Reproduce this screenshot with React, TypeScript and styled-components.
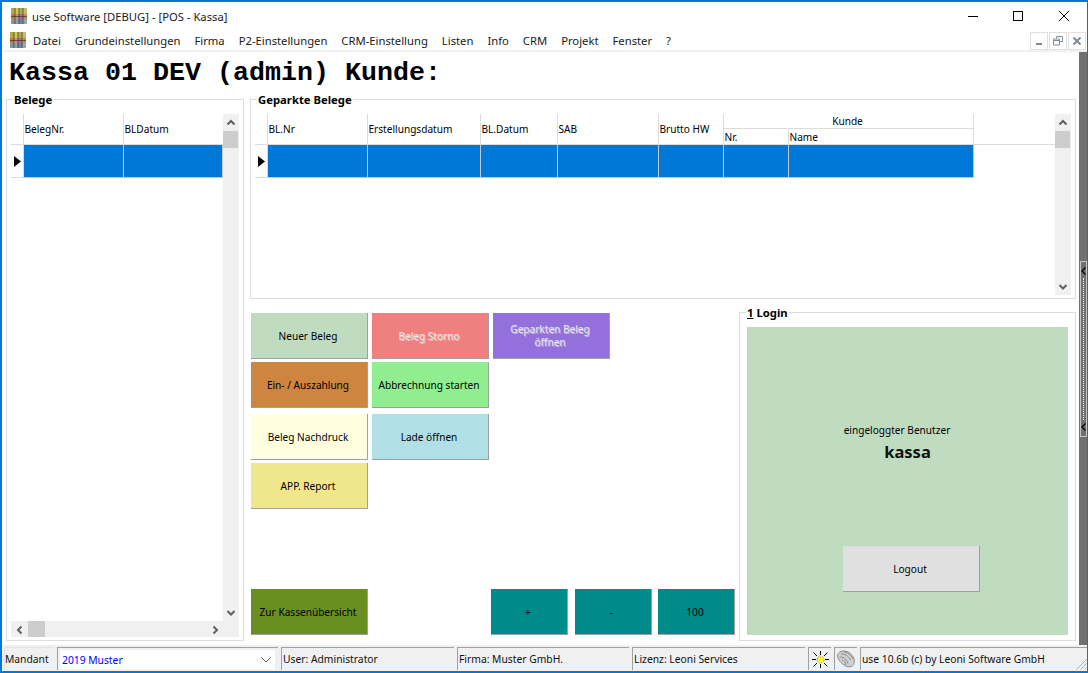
import React from "react";
import styled, { createGlobalStyle } from "styled-components";

const UI_FONT = `"Noto Sans", "Open Sans", sans-serif`;

const GlobalStyle = createGlobalStyle`
  html, body {
    margin: 0;
    padding: 0;
    background: #ffffff;
  }
  * {
    box-sizing: border-box;
  }
`;

const Window = styled.div`
  width: 1088px;
  height: 673px;
  display: flex;
  flex-direction: column;
  overflow: hidden;
  background: #ffffff;
  border-style: solid;
  border-color: #0078d7;
  border-width: 2px 1px 2px 2px;
  color: #000000;
  font-family: ${UI_FONT};
  font-size: 11px;
`;

const TitleBar = styled.div`
  height: 28px;
  flex: none;
  display: flex;
  align-items: center;
  padding-left: 9px;
  gap: 5px;
  font-size: 11.25px;
  color: #1a1a1a;
`;

const CaptionButtons = styled.div`
  margin-left: auto;
  margin-right: 1px;
  display: flex;
`;

const CaptionButton = styled.span<{ $shift?: boolean }>`
  width: 45px;
  height: 28px;
  display: flex;
  align-items: center;
  justify-content: center;
  margin-right: ${(p) => (p.$shift ? 1 : 0)}px;
`;

const MenuBar = styled.div`
  height: 22px;
  flex: none;
  display: flex;
  align-items: center;
  padding-left: 8px;
  border-bottom: 2px solid #f0f0f0;
  font-size: 11.25px;
  color: #1a1a1a;
`;

const MenuItems = styled.div`
  display: flex;
  gap: 14px;
  margin-left: 7px;
  padding-top: 1px;
`;

const MdiButtons = styled.div`
  margin-left: auto;
  margin-right: 1px;
  display: flex;
  gap: 1px;
  align-self: flex-end;
`;

const MdiButton = styled.span`
  width: 18px;
  height: 18px;
  display: flex;
  align-items: center;
  justify-content: center;
  border: 1px solid #e0e0e0;
`;

const Body = styled.div`
  flex: 1;
  min-height: 0;
  display: flex;
`;

const Content = styled.div`
  flex: 1;
  min-width: 0;
  display: flex;
  flex-direction: column;
  padding: 0 3px 4px 4px;
`;

const Heading = styled.h1`
  height: 47px;
  flex: none;
  margin: 0;
  padding: 4px 0 0 3px;
  font-family: "Liberation Mono", "Courier New", monospace;
  font-size: 26.67px;
  line-height: 34px;
  font-weight: 700;
  white-space: pre;
`;

const Panels = styled.div`
  flex: 1;
  min-height: 0;
  display: grid;
  grid-template-columns: 238px 1fr;
  column-gap: 6px;
`;

const RightColumn = styled.div`
  display: flex;
  flex-direction: column;
  gap: 13px;
  min-width: 0;
`;

const Panel = styled.section`
  position: relative;
  border: 1px solid #dcdcdc;
`;

const PanelTitle = styled.span`
  position: absolute;
  top: -7px;
  left: 6px;
  padding: 0 1px;
  background: #ffffff;
  font-size: 11.3px;
  line-height: 14px;
  font-weight: 700;
`;

const BelegePanel = styled(Panel)`
  height: 542px;
  padding: 14px 4px 3px;
  display: grid;
  grid-template-columns: 212px 16px;
  grid-template-rows: 1fr 16px;
`;

const GeparktPanel = styled(Panel)`
  height: 200px;
  flex: none;
  padding: 14px 4px 3px;
  display: grid;
  grid-template-columns: 800px 16px;
`;

const Table = styled.table`
  table-layout: fixed;
  width: 100%;
  border-collapse: separate;
  border-spacing: 0;
  align-self: start;
`;

const HeadCell = styled.th<{ $center?: boolean; $bare?: boolean }>`
  padding: ${(p) => (p.$center ? "1px 2px 0 0" : "0 0 0 0.5px")};
  font-weight: 400;
  font-size: 10.1px;
  line-height: ${(p) => (p.$center ? 13 : 14)}px;
  white-space: nowrap;
  overflow: hidden;
  text-align: ${(p) => (p.$center ? "center" : "left")};
  border-bottom: 1px solid #dcdcdc;
  border-right: ${(p) => (p.$bare ? "0" : "1px solid #dcdcdc")};
`;

const IndicatorCell = styled.td`
  padding: 0 0 0 3px;
  height: 33px;
  border-right: 1px solid #dcdcdc;
  border-bottom: 1px solid #dcdcdc;
`;

const RowCell = styled.td`
  padding: 0;
  height: 33px;
  background: #0078d7;
  border-right: 1px solid #c8c8c8;
  border-bottom: 1px solid #c8c8c8;
`;

const VScroll = styled.div`
  display: flex;
  flex-direction: column;
  background: #f0f0f0;
`;

const HScroll = styled.div`
  grid-column: 1 / span 2;
  display: flex;
  padding-right: 16px;
  background: #f0f0f0;
`;

const ScrollArrow = styled.span<{ $wide?: boolean }>`
  width: ${(p) => (p.$wide ? 17 : 16)}px;
  height: 17px;
  flex: none;
  display: flex;
  align-items: center;
  justify-content: center;
`;

const VThumb = styled.span`
  width: 15px;
  height: 17px;
  flex: none;
  background: #cdcdcd;
`;

const HThumb = styled.span`
  width: 17px;
  height: 16px;
  flex: none;
  background: #cdcdcd;
`;

const ScrollSpacer = styled.span`
  flex: 1;
`;

const Lower = styled.div`
  flex: 1;
  min-height: 0;
  display: grid;
  grid-template-columns: 1fr 337px;
`;

const Actions = styled.div`
  display: flex;
  flex-direction: column;
  justify-content: space-between;
  padding: 1px 4px 6px 1px;
`;

const ActionRows = styled.div`
  display: flex;
  flex-direction: column;
`;

const ActionRow = styled.div<{ $top: number }>`
  display: flex;
  gap: 4px;
  margin-top: ${(p) => p.$top}px;
`;

const ActionButton = styled.button<{ $bg: string; $disabled?: boolean; $width?: number }>`
  width: ${(p) => p.$width ?? 117}px;
  height: 46px;
  padding: 1px 8px 0 6px;
  flex: none;
  font-family: ${UI_FONT};
  font-size: 10.1px;
  line-height: 13px;
  background: ${(p) => p.$bg};
  color: ${(p) => (p.$disabled ? "#e6e6e6" : "#000000")};
  text-shadow: ${(p) => (p.$disabled ? "1px 1px 0 rgba(255,255,255,0.45)" : "none")};
  border-style: solid;
  border-width: 0 1px 1px 0;
  border-color: #a0a0a0;
`;

const BottomActions = styled.div`
  display: flex;
`;

const CountButtons = styled.div`
  margin-left: auto;
  display: flex;
  gap: 6.5px;
`;

const LoginPanel = styled(Panel)`
  padding: 14px 7px 5px;
  height: 329px;
  display: flex;
`;

const LoginBody = styled.div`
  flex: 1;
  background: #c0dcc0;
  display: flex;
  flex-direction: column;
  align-items: center;
  padding-top: 96px;
`;

const LoginLabel = styled.div`
  font-size: 10.1px;
  line-height: 15px;
  margin-right: 21px;
`;

const LoginName = styled.div`
  margin-top: 4px;
  font-size: 16.5px;
  line-height: 20px;
  font-weight: 700;
  color: #111111;
`;

const LogoutButton = styled(ActionButton)`
  margin-top: 84px;
  margin-left: 8px;
`;

const Splitter = styled.div`
  width: 8px;
  flex: none;
  padding: 209px 0 0 1px;
  background: #707070;
`;

const SplitterHandle = styled.div`
  height: 176px;
  width: 7px;
  display: flex;
  flex-direction: column;
  align-items: center;
  justify-content: space-between;
  border: 1px solid #c4c4c4;
  padding: 5px 0;
`;

const SplitterDots = styled.div`
  flex: 1;
  width: 1px;
  margin: 3px 0;
  border-left: 1px dotted #ffffff;
`;

const StatusBar = styled.div`
  height: 26px;
  flex: none;
  display: flex;
  gap: 3px;
  padding: 2px 0 1px 2px;
  background: #f0f0f0;
  font-size: 10.3px;
  color: #111111;
`;

const StatusCell = styled.div<{ $width?: number; $flat?: boolean; $icon?: boolean }>`
  width: ${(p) => (p.$width ? `${p.$width}px` : "auto")};
  flex: ${(p) => (p.$width ? "none" : "1")};
  display: flex;
  align-items: center;
  justify-content: ${(p) => (p.$icon ? "center" : "flex-start")};
  padding-left: ${(p) => (p.$icon || p.$flat ? 0 : 1)}px;
  position: relative;
  white-space: nowrap;
  border-style: solid;
  border-width: 1px 0 0 1px;
  border-color: ${(p) => (p.$flat ? "#e4e4e4" : "#a0a0a0")};
`;

const Combo = styled.div`
  width: 221px;
  flex: none;
  padding: 2px 3px 1px 2px;
  border-style: solid;
  border-width: 1px 0 0 1px;
  border-color: #a0a0a0;
`;

const ComboField = styled.div`
  height: 100%;
  display: flex;
  align-items: center;
  justify-content: space-between;
  padding: 0 4px 0 2px;
  background: #ffffff;
  color: #0000ff;
`;

const SizeGrip = styled.svg`
  position: absolute;
  right: 0;
  bottom: 0;
`;

const AppIcon = () => (
  <svg width="16" height="16" viewBox="0 0 16 16">
    <rect x="0" y="0" width="4" height="6" fill="#b5a84a" />
    <rect x="4" y="0" width="4" height="6" fill="#d8c64a" />
    <rect x="8" y="0" width="4" height="6" fill="#a8b04c" />
    <rect x="12" y="0" width="4" height="6" fill="#c9b870" />
    <rect x="0" y="6" width="4" height="5" fill="#c9753f" />
    <rect x="4" y="6" width="4" height="5" fill="#d98a80" />
    <rect x="8" y="6" width="4" height="5" fill="#b56a8e" />
    <rect x="12" y="6" width="4" height="5" fill="#c58a5a" />
    <rect x="0" y="11" width="4" height="5" fill="#7f9a9a" />
    <rect x="4" y="11" width="4" height="5" fill="#8aa0b0" />
    <rect x="8" y="11" width="4" height="5" fill="#7088a0" />
    <rect x="12" y="11" width="4" height="5" fill="#98a8a8" />
    <path d="M0 8.5H16M4 0V16M8 0V16M12 0V16" stroke="#3c3c3c" strokeWidth="1" fill="none" opacity="0.75" />
  </svg>
);

const Chevron = ({ dir }: { dir: "up" | "down" | "left" | "right" }) => {
  const paths = {
    up: "M1.5 6.5L5 3L8.5 6.5",
    down: "M1.5 3L5 6.5L8.5 3",
    left: "M6.5 1.5L3 5L6.5 8.5",
    right: "M3.5 1.5L7 5L3.5 8.5",
  };
  return (
    <svg width="10" height="10" viewBox="0 0 10 10">
      <path d={paths[dir]} stroke="#606060" strokeWidth="2" fill="none" />
    </svg>
  );
};

const RowPointer = () => (
  <svg width="7" height="11" viewBox="0 0 7 11" style={{ display: "block" }}>
    <path d="M0 0L7 5.5L0 11Z" fill="#000000" />
  </svg>
);

const SplitChevron = () => (
  <svg width="5" height="8" viewBox="0 0 5 8" style={{ flex: "none" }}>
    <path d="M4.5 0.5L1 4L4.5 7.5" stroke="#000000" strokeWidth="1.3" fill="none" />
  </svg>
);

const LampIcon = () => (
  <svg width="17" height="17" viewBox="0 0 17 17">
    <path
      d="M8.5 0V4M8.5 13V17M0 8.5H4M13 8.5H17M1.5 1.5L5 5M15.5 1.5L12 5M1.5 15.5L5 12M15.5 15.5L12 12"
      stroke="#000000"
      strokeWidth="1"
      fill="none"
    />
    <circle cx="8.5" cy="8.5" r="3.6" fill="#f4f040" stroke="#808060" strokeWidth="0.7" strokeDasharray="1 1" />
  </svg>
);

const PhoneIcon = () => (
  <svg width="20" height="19" viewBox="0 0 20 19">
    <path
      d="M1.5 6.5C1 3.5 4 1 7.5 1C11 1 14 2.5 15.5 5C18 7 19 10.5 18 13.5C17 16.5 14 17.5 11 16.5C7 15 2.5 11 1.5 6.5Z"
      fill="#d0d0d0"
      stroke="#8c8c8c"
      strokeWidth="1"
    />
    <path
      d="M5 4C8.5 3.5 12.5 6 14.5 10M3.5 7C7 6.5 10.5 9 12 13.5M7.5 2C11 2 15 4.5 17 9M6 10C8 10 9.5 12 10 15"
      stroke="#8c8c8c"
      strokeWidth="1"
      fill="none"
    />
  </svg>
);

const BELEGE_COLS = [13, 100, 99];
const GEPARKT_COLS = [13, 100, 113, 77, 101, 65, 65, 185, 81];
const GEPARKT_HEADS = ["BL.Nr", "Erstellungsdatum", "BL.Datum", "SAB", "Brutto HW"];

const VerticalScrollbar = () => (
  <VScroll>
    <ScrollArrow>
      <Chevron dir="up" />
    </ScrollArrow>
    <VThumb />
    <ScrollSpacer />
    <ScrollArrow>
      <Chevron dir="down" />
    </ScrollArrow>
  </VScroll>
);

const ColGroup = ({ cols }: { cols: number[] }) => (
  <colgroup>
    {cols.map((w, i) => (
      <col key={i} width={w} />
    ))}
  </colgroup>
);

export default function App() {
  return (
    <>
      <GlobalStyle />
      <Window>
        <TitleBar>
          <AppIcon />
          <span>use Software [DEBUG] - [POS - Kassa]</span>
          <CaptionButtons>
            <CaptionButton>
              <svg width="10" height="10" viewBox="0 0 10 10">
                <path d="M0 5.5H10" stroke="#000" strokeWidth="1" />
              </svg>
            </CaptionButton>
            <CaptionButton $shift>
              <svg width="10" height="10" viewBox="0 0 10 10">
                <rect x="0.5" y="0.5" width="9" height="9" fill="none" stroke="#000" strokeWidth="1" />
              </svg>
            </CaptionButton>
            <CaptionButton>
              <svg width="10" height="10" viewBox="0 0 10 10">
                <path d="M0 0L10 10M10 0L0 10" stroke="#000" strokeWidth="1" />
              </svg>
            </CaptionButton>
          </CaptionButtons>
        </TitleBar>

        <MenuBar>
          <AppIcon />
          <MenuItems>
            {[
              "Datei",
              "Grundeinstellungen",
              "Firma",
              "P2-Einstellungen",
              "CRM-Einstellung",
              "Listen",
              "Info",
              "CRM",
              "Projekt",
              "Fenster",
              "?",
            ].map((item) => (
              <span key={item}>{item}</span>
            ))}
          </MenuItems>
          <MdiButtons>
            <MdiButton>
              <svg width="10" height="10" viewBox="0 0 10 10">
                <rect x="2" y="7" width="6" height="2" fill="#7f8c99" />
              </svg>
            </MdiButton>
            <MdiButton>
              <svg width="10" height="10" viewBox="0 0 10 10">
                <path d="M3.5 2.5V0.5H9.5V5.5H7M0.5 3H6.5V9H0.5ZM0.5 4.5H6.5" stroke="#7f8c99" strokeWidth="1" fill="none" />
              </svg>
            </MdiButton>
            <MdiButton>
              <svg width="10" height="10" viewBox="0 0 10 10">
                <path d="M1.5 1.5L8.5 8.5M8.5 1.5L1.5 8.5" stroke="#7f8c99" strokeWidth="2" />
              </svg>
            </MdiButton>
          </MdiButtons>
        </MenuBar>

        <Body>
          <Content>
            <Heading>Kassa 01 DEV (admin) Kunde:</Heading>
            <Panels>
              <BelegePanel>
                <PanelTitle>Belege</PanelTitle>
                <Table>
                  <ColGroup cols={BELEGE_COLS} />
                  <thead>
                    <tr style={{ height: 31 }}>
                      <HeadCell />
                      <HeadCell>BelegNr.</HeadCell>
                      <HeadCell $bare>BLDatum</HeadCell>
                    </tr>
                  </thead>
                  <tbody>
                    <tr>
                      <IndicatorCell>
                        <RowPointer />
                      </IndicatorCell>
                      <RowCell />
                      <RowCell />
                    </tr>
                  </tbody>
                </Table>
                <VerticalScrollbar />
                <HScroll>
                  <ScrollArrow $wide>
                    <Chevron dir="left" />
                  </ScrollArrow>
                  <HThumb />
                  <ScrollSpacer />
                  <ScrollArrow $wide>
                    <Chevron dir="right" />
                  </ScrollArrow>
                </HScroll>
              </BelegePanel>

              <RightColumn>
                <GeparktPanel>
                  <PanelTitle>Geparkte Belege</PanelTitle>
                  <Table>
                    <ColGroup cols={GEPARKT_COLS} />
                    <thead>
                      <tr style={{ height: 15 }}>
                        <HeadCell rowSpan={2} />
                        {GEPARKT_HEADS.map((head) => (
                          <HeadCell key={head} rowSpan={2}>
                            {head}
                          </HeadCell>
                        ))}
                        <HeadCell colSpan={2} $center>
                          Kunde
                        </HeadCell>
                        <HeadCell rowSpan={2} $bare />
                      </tr>
                      <tr style={{ height: 16 }}>
                        <HeadCell>Nr.</HeadCell>
                        <HeadCell>Name</HeadCell>
                      </tr>
                    </thead>
                    <tbody>
                      <tr>
                        <IndicatorCell>
                          <RowPointer />
                        </IndicatorCell>
                        {GEPARKT_COLS.slice(1, -1).map((_, i) => (
                          <RowCell key={i} />
                        ))}
                        <td />
                      </tr>
                    </tbody>
                  </Table>
                  <VerticalScrollbar />
                </GeparktPanel>

                <Lower>
                  <Actions>
                    <ActionRows>
                      <ActionRow $top={0}>
                        <ActionButton $bg="#c0dcc0">Neuer Beleg</ActionButton>
                        <ActionButton $bg="#f08080" $disabled>
                          Beleg Storno
                        </ActionButton>
                        <ActionButton $bg="#9370db" $disabled>
                          Geparkten Beleg öffnen
                        </ActionButton>
                      </ActionRow>
                      <ActionRow $top={3}>
                        <ActionButton $bg="#cd853f">Ein- / Auszahlung</ActionButton>
                        <ActionButton $bg="#90ee90">Abbrechnung starten</ActionButton>
                      </ActionRow>
                      <ActionRow $top={6}>
                        <ActionButton $bg="#ffffe0">Beleg Nachdruck</ActionButton>
                        <ActionButton $bg="#b0e0e6">Lade öffnen</ActionButton>
                      </ActionRow>
                      <ActionRow $top={3}>
                        <ActionButton $bg="#f0e68c">APP. Report</ActionButton>
                      </ActionRow>
                    </ActionRows>
                    <BottomActions>
                      <ActionButton $bg="#6b8e23">Zur Kassenübersicht</ActionButton>
                      <CountButtons>
                        <ActionButton $bg="#008b8b" $width={77}>
                          +
                        </ActionButton>
                        <ActionButton $bg="#008b8b" $width={77}>
                          -
                        </ActionButton>
                        <ActionButton $bg="#008b8b" $width={77}>
                          100
                        </ActionButton>
                      </CountButtons>
                    </BottomActions>
                  </Actions>

                  <LoginPanel>
                    <PanelTitle>
                      <u>1</u> Login
                    </PanelTitle>
                    <LoginBody>
                      <LoginLabel>eingeloggter Benutzer</LoginLabel>
                      <LoginName>kassa</LoginName>
                      <LogoutButton $bg="#e0e0e0" $width={137}>
                        Logout
                      </LogoutButton>
                    </LoginBody>
                  </LoginPanel>
                </Lower>
              </RightColumn>
            </Panels>
          </Content>
          <Splitter>
            <SplitterHandle>
              <SplitChevron />
              <SplitterDots />
              <SplitChevron />
            </SplitterHandle>
          </Splitter>
        </Body>

        <StatusBar>
          <StatusCell $width={50} $flat>
            Mandant
          </StatusCell>
          <Combo>
            <ComboField>
              <span>2019 Muster</span>
              <svg width="10" height="6" viewBox="0 0 10 6">
                <path d="M0.5 0.5L5 5L9.5 0.5" stroke="#606060" strokeWidth="1" fill="none" />
              </svg>
            </ComboField>
          </Combo>
          <StatusCell $width={173}>User: Administrator</StatusCell>
          <StatusCell $width={172}>Firma: Muster GmbH.</StatusCell>
          <StatusCell $width={173}>Lizenz: Leoni Services</StatusCell>
          <StatusCell $width={23} $icon>
            <LampIcon />
          </StatusCell>
          <StatusCell $width={23} $icon>
            <PhoneIcon />
          </StatusCell>
          <StatusCell>
            use 10.6b (c) by Leoni Software GmbH
            <SizeGrip width="12" height="12" viewBox="0 0 12 12">
              <path d="M11.5 1.5L1.5 11.5M11.5 5.5L5.5 11.5M11.5 9.5L9.5 11.5" stroke="#b0b0b0" strokeWidth="1" />
            </SizeGrip>
          </StatusCell>
        </StatusBar>
      </Window>
    </>
  );
}
